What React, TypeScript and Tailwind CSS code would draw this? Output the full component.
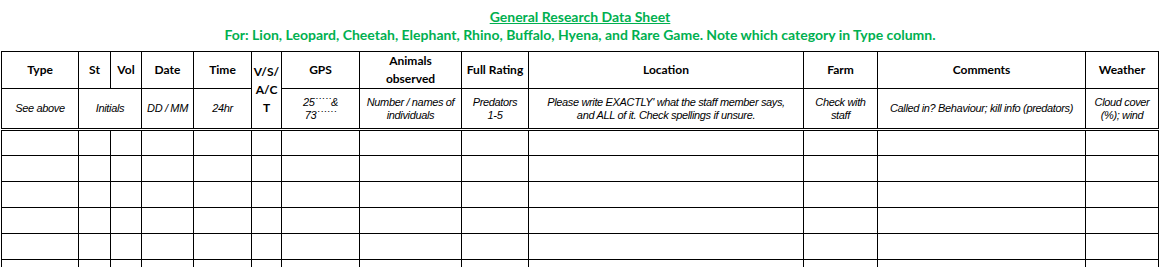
const cols = [77, 32, 31, 52, 58, 30, 78, 102, 67, 275, 74, 208, 73];

const head = 'border border-black p-0 text-center align-middle font-bold text-[12px] leading-[18px] text-black';
const note = "border border-black border-b-[3px] [border-bottom-style:double] p-0 text-center align-middle italic text-[11px] leading-[13px] tracking-[-0.35px] text-black font-['Liberation_Sans',Arial,sans-serif]";
const cell = 'border border-black p-0 h-[26px]';

export default function App() {
  return (
    <div className="w-[1163px] h-[267px] overflow-hidden bg-white font-['Lato','Liberation_Sans',sans-serif]">
      {/* Titles */}
      <div className="w-[1160px] pt-[8px] text-center font-bold text-[14px] leading-[18px] text-[#00b050]">
        <div className="underline">General Research Data Sheet</div>
        <div>For: Lion, Leopard, Cheetah, Elephant, Rhino, Buffalo, Hyena, and Rare Game. Note which category in Type column.</div>
      </div>

      {/* Data sheet */}
      <table className="mt-[7px] ml-[1px] w-[1158px] table-fixed border-collapse">
        <colgroup>
          {cols.map((w, i) => (
            <col key={i} style={{ width: w }} />
          ))}
        </colgroup>
        <tbody>
          <tr className="h-[37px]">
            <td className={head}>Type</td>
            <td className={head}>St</td>
            <td className={head}>Vol</td>
            <td className={head}>Date</td>
            <td className={head}>Time</td>
            <td rowSpan={2} className={`${head} border-b-[3px] [border-bottom-style:double]`}>
              V/S/
              <br />
              A/C
              <br />T
            </td>
            <td className={head}>GPS</td>
            <td className={head}>
              Animals
              <br />
              observed
            </td>
            <td className={head}>Full Rating</td>
            <td className={head}>Location</td>
            <td className={head}>Farm</td>
            <td className={head}>Comments</td>
            <td className={head}>Weather</td>
          </tr>
          <tr className="h-[41px]">
            <td className={note}>See above</td>
            <td colSpan={2} className={note}>Initials</td>
            <td className={note}>DD / MM</td>
            <td className={note}>24hr</td>
            <td className={note}>
              25˙˙˙˙˙&amp;
              <br />
              73˙˙˙˙˙˙
            </td>
            <td className={note}>
              Number / names of
              <br />
              individuals
            </td>
            <td className={note}>
              Predators
              <br />
              1-5
            </td>
            <td className={note}>
              Please write EXACTLY' what the staff member says,
              <br />
              and ALL of it. Check spellings if unsure.
            </td>
            <td className={note}>
              Check with
              <br />
              staff
            </td>
            <td className={note}>Called in? Behaviour; kill info (predators)</td>
            <td className={note}>
              Cloud cover
              <br />
              (%); wind
            </td>
          </tr>
          {[0, 1, 2, 3, 4, 5].map((r) => (
            <tr key={r}>
              {cols.map((_, i) => (
                <td key={i} className={cell} />
              ))}
            </tr>
          ))}
        </tbody>
      </table>
    </div>
  );
}
